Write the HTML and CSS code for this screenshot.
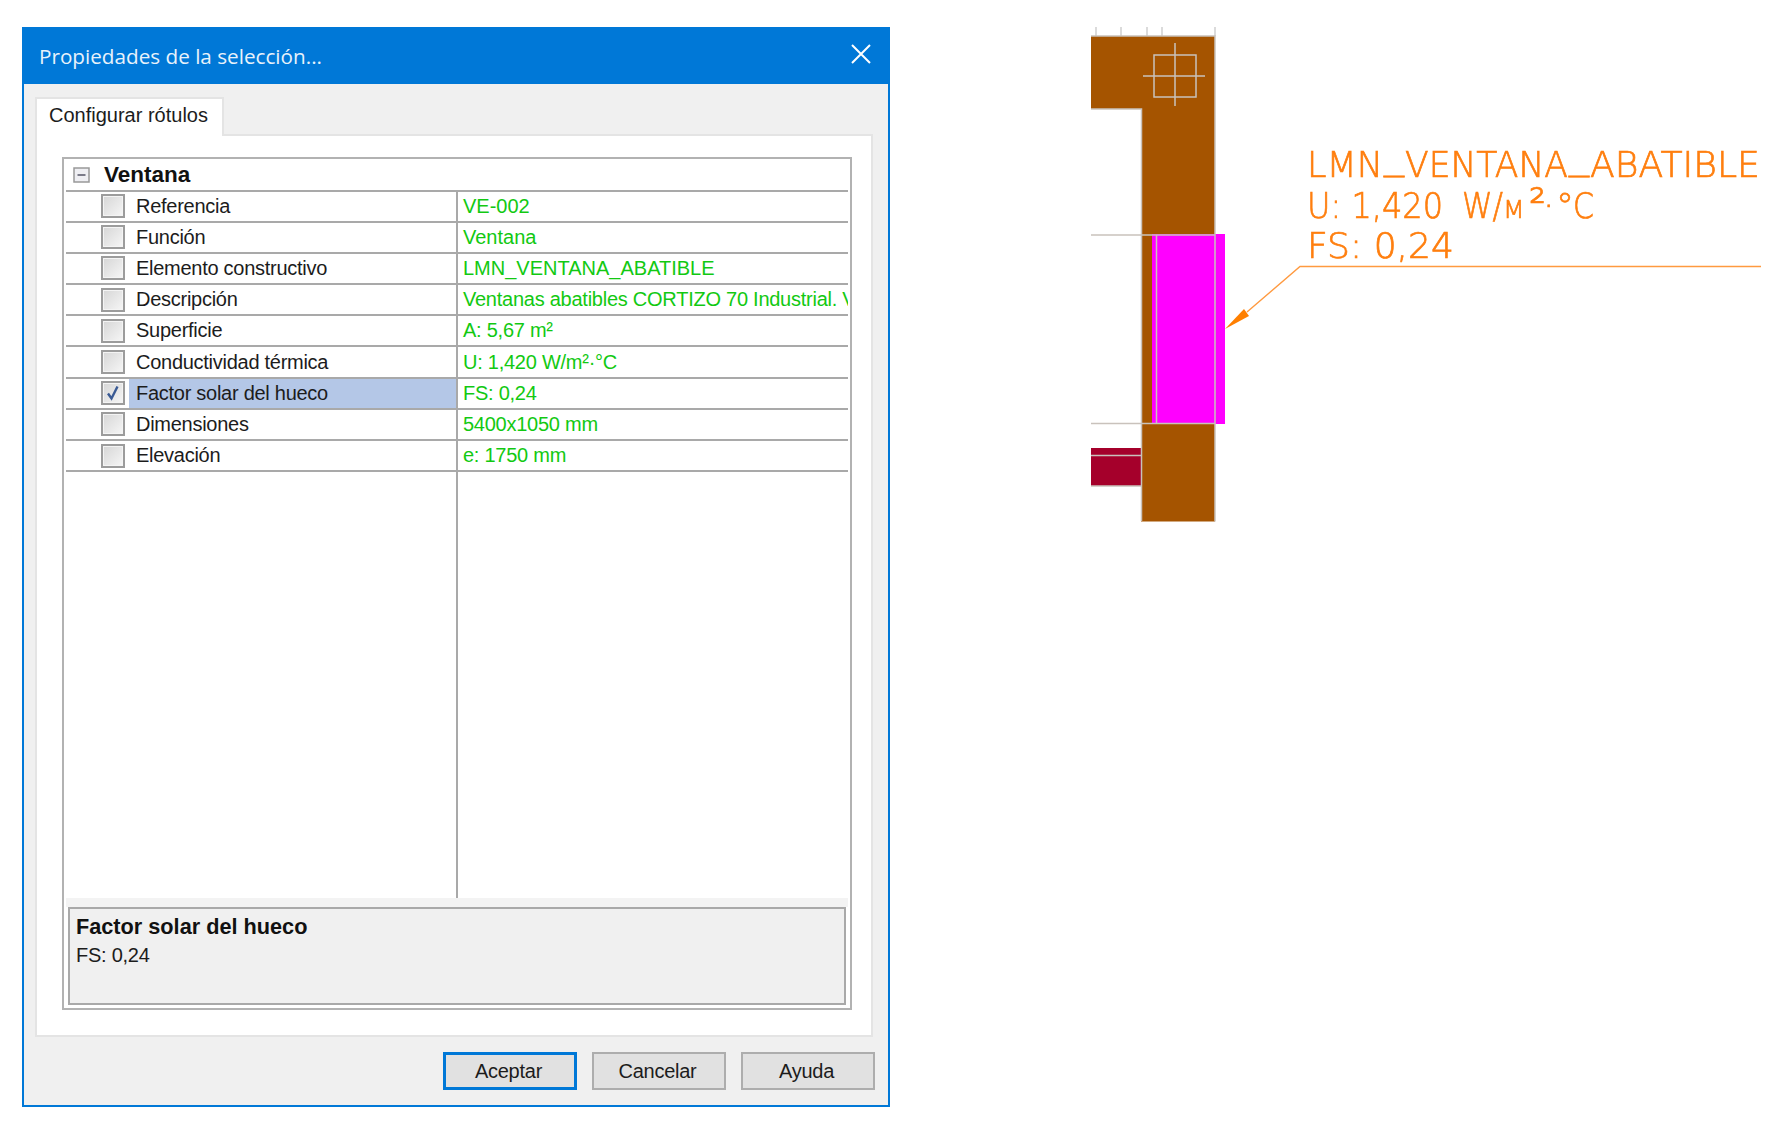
FILE: index.html
```html
<!DOCTYPE html>
<html lang="es">
<head>
<meta charset="utf-8">
<title>Propiedades de la selección</title>
<link rel="stylesheet" href="styles.css">
</head>
<body>
<div class="page">
  <section class="dialog">
    <header class="titlebar">
      <span class="title">Propiedades de la selección...</span>
      <svg class="close" viewBox="0 0 20 20"><path d="M1 1L19 19M19 1L1 19"/></svg>
    </header>
    <div class="dialog-body">
      <div class="tabs"><div class="tab">Configurar rótulos</div></div>
      <div class="panel">
        <div class="grid">
          <div class="group">
            <svg class="expander" viewBox="0 0 17 16"><rect x="1" y="1" width="15" height="14"/><path d="M4.5 8H12.5"/></svg>
            <span class="group-name">Ventana</span>
          </div>
          <div class="row"><div class="name"><span class="check"></span><span class="label">Referencia</span></div><div class="value caps">VE-002</div></div>
          <div class="row"><div class="name"><span class="check"></span><span class="label">Función</span></div><div class="value caps">Ventana</div></div>
          <div class="row"><div class="name"><span class="check"></span><span class="label">Elemento constructivo</span></div><div class="value caps">LMN_VENTANA_ABATIBLE</div></div>
          <div class="row"><div class="name"><span class="check"></span><span class="label">Descripción</span></div><div class="value">Ventanas abatibles CORTIZO 70 Industrial. Ventana</div></div>
          <div class="row"><div class="name"><span class="check"></span><span class="label">Superficie</span></div><div class="value">A: 5,67 m²</div></div>
          <div class="row"><div class="name"><span class="check"></span><span class="label">Conductividad térmica</span></div><div class="value">U: 1,420 W/m²·°C</div></div>
          <div class="row selected"><div class="name"><span class="check"><svg viewBox="0 0 16 16"><path d="M3 8.500L6.500 13.500L12.500 1.500"/></svg></span><span class="label">Factor solar del hueco</span></div><div class="value">FS: 0,24</div></div>
          <div class="row"><div class="name"><span class="check"></span><span class="label">Dimensiones</span></div><div class="value">5400x1050 mm</div></div>
          <div class="row"><div class="name"><span class="check"></span><span class="label">Elevación</span></div><div class="value">e: 1750 mm</div></div>
          <div class="filler"><div class="filler-name"></div></div>
          <div class="band"></div>
          <div class="desc">
            <div class="desc-title">Factor solar del hueco</div>
            <div class="desc-value">FS: 0,24</div>
          </div>
        </div>
      </div>
      <footer class="actions">
        <button class="btn default">Aceptar</button>
        <button class="btn">Cancelar</button>
        <button class="btn">Ayuda</button>
      </footer>
    </div>
  </section>

  <svg class="drawing" viewBox="890 27 886 600">
    <g class="ticks">
      <path d="M1096 27V36M1121 27V36M1147 27V36M1162 27V36M1215 27V36"/>
    </g>
    <path class="brown" d="M1091 36H1215V235H1142V109H1091Z"/>
    <rect class="brown" x="1142" y="235" width="10" height="188"/>
    <rect class="magenta" x="1152" y="234" width="73" height="190"/>
    <path class="brown" d="M1141 423H1215V521.5H1141Z"/>
    <rect class="crimson" x="1091" y="448" width="51" height="38"/>
    <g class="lines">
      <path d="M1091 36H1215V235M1091 109H1141.500V521M1215 423V521.500"/>
      <path d="M1091 235H1215M1091 423.500H1215M1156.500 235V423.500M1215 235V423.500"/>
      <path d="M1091 455.500H1141M1091 486H1141"/>
      <rect x="1154" y="55" width="42" height="42"/>
      <path d="M1143 76H1205M1175 43V106"/>
    </g>
    <g class="label-text">
      <text y="177"><tspan x="1307" textLength="76" lengthAdjust="spacingAndGlyphs">LMN</tspan><tspan x="1384" y="169" textLength="20" lengthAdjust="spacingAndGlyphs">_</tspan><tspan x="1405" y="177" textLength="163" lengthAdjust="spacingAndGlyphs">VENTANA</tspan><tspan x="1569" y="169" textLength="20" lengthAdjust="spacingAndGlyphs">_</tspan><tspan x="1590" y="177" textLength="170" lengthAdjust="spacingAndGlyphs">ABATIBLE</tspan></text>
      <text x="1307" y="218" textLength="136" lengthAdjust="spacingAndGlyphs">U: 1,420</text>
      <text x="1462" y="218" textLength="41" lengthAdjust="spacingAndGlyphs">W/</text>
      <text class="small-m" x="1503" y="218">m</text>
      <text class="sup" x="1529" y="218" textLength="17" lengthAdjust="spacingAndGlyphs">²</text>
      <text x="1543" y="218">·</text>
      <text x="1556" y="218">°</text>
      <text x="1573" y="218" textLength="21" lengthAdjust="spacingAndGlyphs">C</text>
      <text x="1307" y="258" textLength="147" lengthAdjust="spacingAndGlyphs">FS: 0,24</text>
    </g>
    <path class="leader" d="M1761 266.500H1300L1247 312"/>
    <path class="arrow" d="M1225 329L1244 309L1249 316Z"/>
  </svg>
</div>
</body>
</html>
```
FILE: styles.css
```css
* { box-sizing: border-box; }
html, body { margin: 0; background: #fff; }
body { width: 1776px; height: 1123px; overflow: hidden; font-family: "Liberation Sans", Arial, sans-serif; color: #1c1c1c; }
.page { display: flex; align-items: flex-start; padding: 27px 0 0 22px; filter: blur(.4px); }

.dialog { width: 868px; height: 1080px; flex: none; display: flex; flex-direction: column; background: #f0f0f0; border: 2px solid #0078d7; border-top: 0; }
.titlebar { height: 57px; flex: none; margin: 0 -2px; padding: 0 17px; display: flex; align-items: center; justify-content: space-between; background: #0078d7; }
.title { font-family: "Open Sans", sans-serif; font-size: 20.7px; color: #e8f2fb; }
.close { width: 20px; height: 20px; margin: -4px 2px 0 0; }
.close path { fill: none; stroke: #fff; stroke-width: 2; }

.dialog-body { flex: 1; display: flex; flex-direction: column; padding: 13px 15px 0 11px; }
.tabs { display: flex; height: 37px; flex: none; }
.tab { position: relative; z-index: 1; width: 189px; height: 39px; padding: 3px 0 0 12px; background: #fff; border: 2px solid #e4e4e4; border-bottom: 0; font-size: 20px; line-height: 26px; }
.panel { height: 903px; flex: none; padding: 21px 19px 0 25px; background: #fff; border: 2px solid #e4e4e4; }

.grid { height: 853px; display: flex; flex-direction: column; padding: 0 2px 3px; border: 2px solid #b2b2b2; }
.group { height: 32.5px; flex: none; display: flex; align-items: center; padding: 1px 0 0 7px; border-bottom: 2px solid #a9a9a9; }
.expander { width: 17px; height: 16px; }
.expander rect { fill: #efeff3; stroke: #999; stroke-width: 1.5; }
.expander path { stroke: #556; stroke-width: 1.5; }
.group-name { margin-left: 14px; font-size: 22.5px; font-weight: 700; color: #111; }

.row { height: 31.2px; flex: none; display: flex; border-bottom: 2px solid #a9a9a9; font-size: 20px; }
.name { width: 392px; flex: none; display: flex; align-items: center; padding-left: 35px; border-right: 2px solid #a9a9a9; }
.check { width: 24px; height: 24px; flex: none; display: block; padding: 2px; border: 2px solid #9c9c9c; background: linear-gradient(135deg, #d6d6d6, #f6f6f6); box-shadow: inset 0 0 0 1px #f4f4f4; }
.check svg { display: block; width: 16px; height: 16px; }
.check path { fill: none; stroke: #3a5a94; stroke-width: 2.4; }
.label { flex: 1; align-self: stretch; display: flex; align-items: center; margin-left: 4px; padding: 0 0 0 7px; white-space: nowrap; letter-spacing: -.27px; }
.selected .label { background: #b4c7e7; }
.value { flex: 1; min-width: 0; display: flex; align-items: center; padding: 0 0 0 5px; overflow: hidden; white-space: nowrap; color: #12c912; letter-spacing: -.25px; }
.value.caps { letter-spacing: 0; }

.filler { flex: 1; min-height: 0; }
.filler-name { width: 392px; height: 100%; border-right: 2px solid #a9a9a9; }
.band { height: 9px; flex: none; background: #f3f3f3; }
.desc { height: 98px; flex: none; margin: 0 2px; padding: 4px 6px; background: #f0f0f0; border: 2px solid #a9a9a9; }
.desc-title { font-size: 21.7px; font-weight: 700; line-height: 27px; color: #111; }
.desc-value { margin-top: 2px; font-size: 20px; line-height: 27px; letter-spacing: -.25px; }

.actions { display: flex; justify-content: flex-end; gap: 15px; margin: 15px -2px 0 0; }
.btn { width: 134px; height: 38px; padding: 1px 3px 0 0; font: 20px "Liberation Sans", Arial, sans-serif; letter-spacing: -.25px; color: #1c1c1c; background: #e1e1e1; border: 2px solid #adadad; }
.btn.default { border: 3px solid #0078d7; }

.drawing { width: 886px; height: 600px; flex: none; }
.ticks path { fill: none; stroke: #d0d0d0; stroke-width: 1.5; }
.brown { fill: #a55400; }
.magenta { fill: #ff00ff; }
.crimson { fill: #a5002b; }
.lines path, .lines rect { fill: none; stroke: #c9c2bc; stroke-width: 1.5; }
.label-text text { font-family: "DejaVu Sans", sans-serif; font-weight: 200; font-size: 36px; fill: #ff7f0f; stroke: #ff7f0f; stroke-width: .7px; }
.label-text .small-m { font-variant: small-caps; }
.label-text .sup { font-size: 42px; }
.leader { fill: none; stroke: #ff9a40; stroke-width: 1.4; }
.arrow { fill: #ff7f00; }
```
